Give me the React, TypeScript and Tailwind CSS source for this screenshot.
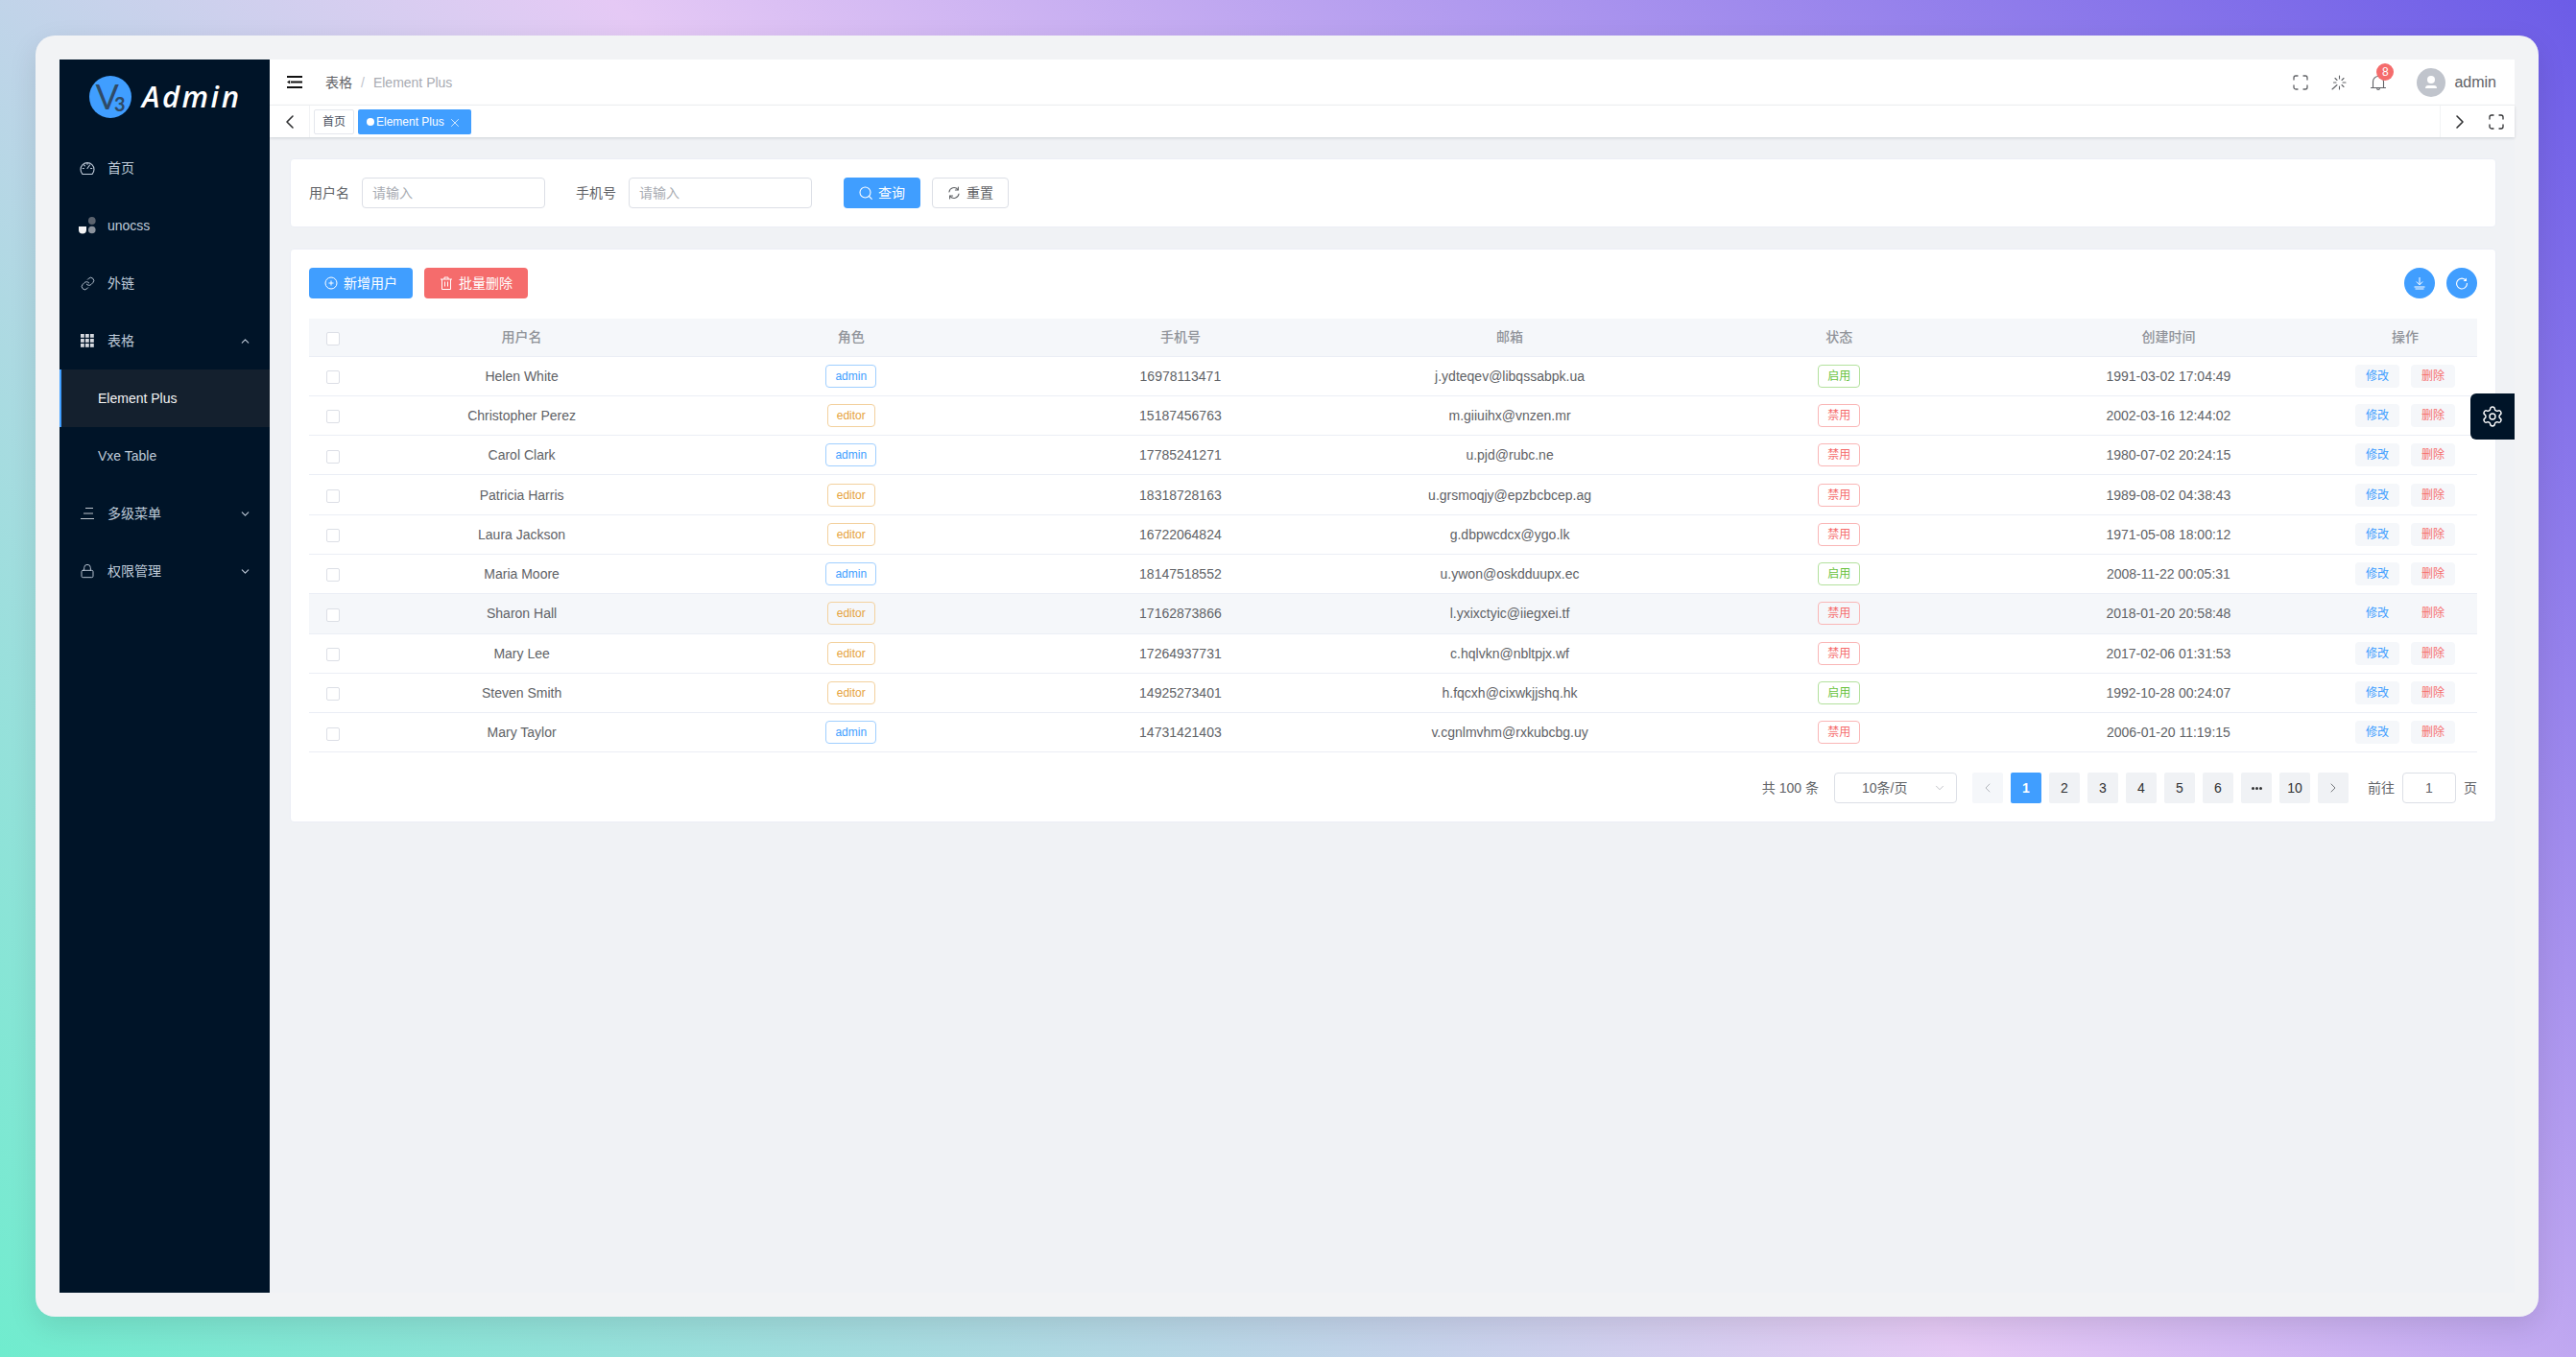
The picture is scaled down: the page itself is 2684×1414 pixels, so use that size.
import { ChevronDown, ChevronLeft, ChevronRight, ChevronUp, Link, Lock, Settings, X } from 'lucide-react'

const users = [
  { name: 'Helen White', role: 'admin', phone: '16978113471', email: 'j.ydteqev@libqssabpk.ua', on: true, time: '1991-03-02 17:04:49' },
  { name: 'Christopher Perez', role: 'editor', phone: '15187456763', email: 'm.giiuihx@vnzen.mr', on: false, time: '2002-03-16 12:44:02' },
  { name: 'Carol Clark', role: 'admin', phone: '17785241271', email: 'u.pjd@rubc.ne', on: false, time: '1980-07-02 20:24:15' },
  { name: 'Patricia Harris', role: 'editor', phone: '18318728163', email: 'u.grsmoqjy@epzbcbcep.ag', on: false, time: '1989-08-02 04:38:43' },
  { name: 'Laura Jackson', role: 'editor', phone: '16722064824', email: 'g.dbpwcdcx@ygo.lk', on: false, time: '1971-05-08 18:00:12' },
  { name: 'Maria Moore', role: 'admin', phone: '18147518552', email: 'u.ywon@oskdduupx.ec', on: true, time: '2008-11-22 00:05:31' },
  { name: 'Sharon Hall', role: 'editor', phone: '17162873866', email: 'l.yxixctyic@iiegxei.tf', on: false, time: '2018-01-20 20:58:48' },
  { name: 'Mary Lee', role: 'editor', phone: '17264937731', email: 'c.hqlvkn@nbltpjx.wf', on: false, time: '2017-02-06 01:31:53' },
  { name: 'Steven Smith', role: 'editor', phone: '14925273401', email: 'h.fqcxh@cixwkjjshq.hk', on: true, time: '1992-10-28 00:24:07' },
  { name: 'Mary Taylor', role: 'admin', phone: '14731421403', email: 'v.cgnlmvhm@rxkubcbg.uy', on: false, time: '2006-01-20 11:19:15' },
]

function FullscreenIcon({ className }: { className?: string }) {
  return (
    <svg viewBox="0 0 16 16" className={className} fill="none" stroke="currentColor" strokeWidth="1.3" strokeLinecap="round">
      <path d="M1 5V3a2 2 0 0 1 2-2h2M11 1h2a2 2 0 0 1 2 2v2M15 11v2a2 2 0 0 1-2 2h-2M5 15H3a2 2 0 0 1-2-2v-2" />
    </svg>
  )
}

function OdometerIcon() {
  return (
    <svg viewBox="0 0 16 16" className="w-4 h-4" fill="none" stroke="currentColor" strokeWidth="1.1">
      <path d="M3 14.5A7 7 0 1 1 13 14.5Z" strokeLinejoin="round" />
      <path d="M8 8.5 10.5 5M8 3v1.2M3.2 8.5h1.2M11.6 8.5h1.2M4.6 5l.8.8" strokeLinecap="round" />
    </svg>
  )
}

function UnocssIcon() {
  return (
    <svg viewBox="0 0 18 18" className="w-[18px] h-[18px]">
      <path d="M0 10h8v3.5a4 4 0 0 1-8 0Z" fill="#f4f4f5" />
      <circle cx="13.8" cy="13.5" r="3.8" fill="#8a929c" />
      <rect x="10" y="0" width="7.6" height="8" rx="3.8" fill="#5b636e" />
    </svg>
  )
}

function GridIcon() {
  return (
    <svg viewBox="0 0 14 14" className="w-[14px] h-[14px]" fill="#d5d9df">
      {[0, 5, 10].map((y) =>
        [0, 5, 10].map((x) => <rect key={`${x}-${y}`} x={x} y={y} width="3.8" height="3.8" />),
      )}
    </svg>
  )
}

function MenuLinesIcon() {
  return (
    <svg viewBox="0 0 16 14" className="w-4 h-[14px]" fill="none" stroke="#c0c6ce" strokeWidth="1">
      <path d="M6 1.5h8M4 7h10M1 12.5h14" />
    </svg>
  )
}

function FoldIcon() {
  return (
    <svg viewBox="0 0 16 13" className="w-4 h-[13px]" fill="#111">
      <rect width="16" height="2" />
      <rect x="4" y="5.5" width="12" height="2" />
      <rect y="11" width="16" height="2" />
      <path d="M0 6.5 3.2 4.4v4.2Z" />
    </svg>
  )
}

function SparkIcon() {
  return (
    <svg viewBox="0 0 16 16" className="w-4 h-4" fill="none" stroke="#606266" strokeWidth="1.1" strokeLinecap="round">
      <path d="M8.5 1v3M8.5 12v3M12 8h3M2.5 8h2.5M11 5.5l2-2M11 10.5l2 2M6 5.5l-2-2M6 10.5 1 15" />
    </svg>
  )
}

function BellIcon() {
  return (
    <svg viewBox="0 0 18 18" className="w-[18px] h-[18px]" fill="none" stroke="#606266" strokeWidth="1.1" strokeLinecap="round" strokeLinejoin="round">
      <path d="M1.5 14.5h15M3.5 14.5V8a5.5 5.5 0 0 1 11 0v6.5M9 1v1.5M7.5 14.5a1.5 2 0 0 0 3 0" />
    </svg>
  )
}

function SearchIcon() {
  return (
    <svg viewBox="0 0 14 14" className="w-[14px] h-[14px]" fill="none" stroke="currentColor" strokeWidth="1.1" strokeLinecap="round">
      <circle cx="6.5" cy="6.5" r="5.5" />
      <path d="m10.5 10.5 2.8 2.8" />
    </svg>
  )
}

function RefreshIcon() {
  return (
    <svg viewBox="0 0 14 14" className="w-[14px] h-[14px]" fill="none" stroke="currentColor" strokeWidth="1.1" strokeLinecap="round">
      <path d="M2 6a5 5 0 0 1 9-2.4M12 8a5 5 0 0 1-9 2.4" />
      <path d="M11.4 1v3h-3M2.6 13v-3h3" />
    </svg>
  )
}

function PlusCircleIcon() {
  return (
    <svg viewBox="0 0 14 14" className="w-[14px] h-[14px]" fill="none" stroke="currentColor" strokeWidth="1">
      <circle cx="7" cy="7" r="6" />
      <path d="M7 4.5v5M4.5 7h5" />
    </svg>
  )
}

function TrashIcon() {
  return (
    <svg viewBox="0 0 14 14" className="w-[14px] h-[14px]" fill="none" stroke="currentColor" strokeWidth="1">
      <path d="M1 3h12M5 3V1h4v2M2.5 3v10.5h9V3M5.5 5.5v5M8.5 5.5v5" />
    </svg>
  )
}

function DownloadIcon() {
  return (
    <svg viewBox="0 0 14 14" className="w-[14px] h-[14px]" fill="none" stroke="#fff" strokeWidth="1">
      <path d="M7 1v7.5M3.8 5.5 7 8.8l3.2-3.3M1.5 11h11M2.5 13h9" />
    </svg>
  )
}

function CircleRefreshIcon() {
  return (
    <svg viewBox="0 0 14 14" className="w-[14px] h-[14px]" fill="none" stroke="#fff" strokeWidth="1.1">
      <path d="M11.5 4.5A5.4 5.4 0 1 0 12.4 7" />
      <path d="M12 1.5v3.4H8.6" fill="#fff" stroke="none" />
    </svg>
  )
}

function AvatarIcon() {
  return (
    <svg viewBox="0 0 30 30" className="w-[30px] h-[30px]">
      <circle cx="15" cy="15" r="15" fill="#c0c4cc" />
      <circle cx="15" cy="12" r="4" fill="#fff" />
      <path d="M9 21a3 3 0 0 1 3-3h6a3 3 0 0 1 3 3Z" fill="#fff" />
    </svg>
  )
}

function Logo() {
  return (
    <div className="h-[83px] shrink-0 flex items-center pl-[31px] pb-[6px]">
      <div className="w-[44px] h-[44px] rounded-full bg-[#409eff] flex items-center justify-center text-[#2f4a66] font-['Lato',sans-serif]">
        <span className="text-[36px] leading-none -mt-[2px]">V</span>
        <span className="text-[20px] leading-none font-bold -ml-[5px] mt-[14px]">3</span>
      </div>
      <span className="ml-[11px] font-['Open_Sans',sans-serif] italic font-semibold text-[31px] leading-none text-white tracking-[2.5px]">Admin</span>
    </div>
  )
}

function MenuItem({ icon, label, arrow }: { icon: React.ReactNode; label: string; arrow?: 'up' | 'down' }) {
  return (
    <div className="h-[60px] flex items-center pl-[20px] pr-[19px] text-[#bfcbd9]">
      <span className="w-[18px] h-[18px] flex items-center justify-center">{icon}</span>
      <span className="ml-[12px] flex-1">{label}</span>
      {arrow === 'up' && <ChevronUp size={13} />}
      {arrow === 'down' && <ChevronDown size={13} />}
    </div>
  )
}

function Sidebar() {
  return (
    <aside className="w-[219px] shrink-0 bg-[#001428] text-sm flex flex-col">
      <Logo />
      <MenuItem icon={<OdometerIcon />} label="首页" />
      <MenuItem icon={<UnocssIcon />} label="unocss" />
      <MenuItem icon={<Link size={15} strokeWidth={1.5} />} label="外链" />
      <MenuItem icon={<GridIcon />} label="表格" arrow="up" />
      <div className="h-[60px] flex items-center pl-[38px] bg-[#14202e] border-l-2 border-[#409eff] text-[#f4f4f5]">Element Plus</div>
      <div className="h-[60px] flex items-center pl-[40px] text-[#bfcbd9]">Vxe Table</div>
      <MenuItem icon={<MenuLinesIcon />} label="多级菜单" arrow="down" />
      <MenuItem icon={<Lock size={16} strokeWidth={1.4} />} label="权限管理" arrow="down" />
    </aside>
  )
}

function Navbar() {
  return (
    <div className="h-[48px] shrink-0 bg-white border-b border-[#f2f3f5] flex items-center pl-[18px] pr-[19px] text-sm">
      <FoldIcon />
      <span className="ml-[24px] text-[#606266]">表格</span>
      <span className="mx-[9px] text-[#c0c4cc]">/</span>
      <span className="text-[#a8abb2]">Element Plus</span>
      <div className="flex-1" />
      <div className="flex items-center gap-[24px] text-[#606266]">
        <FullscreenIcon className="w-4 h-4" />
        <SparkIcon />
        <div className="relative">
          <BellIcon />
          <span className="absolute -top-[11px] left-[7px] w-[18px] h-[18px] rounded-full bg-[#f56c6c] text-white text-xs flex items-center justify-center">8</span>
        </div>
      </div>
      <div className="ml-[31px] flex items-center gap-[9px]">
        <AvatarIcon />
        <span className="text-base text-[#606266]">admin</span>
      </div>
    </div>
  )
}

function TagsBar() {
  return (
    <div className="h-[33px] shrink-0 bg-white flex items-center shadow-[0_1px_3px_rgba(0,21,41,0.15)] relative text-xs">
      <div className="w-[42px] h-full flex items-center justify-center border-r border-[#f2f3f5] text-[#303133]">
        <ChevronLeft size={24} strokeWidth={1.6} />
      </div>
      <div className="ml-[4px] w-[42px] h-[26px] border border-[#e4e7ed] rounded-[2px] flex items-center justify-center text-[#495060]">首页</div>
      <div className="ml-[4px] h-[26px] w-[118px] bg-[#409eff] rounded-[2px] flex items-center pl-[9px] text-white">
        <span className="w-2 h-2 rounded-full bg-white mr-[2px]" />
        <span>Element Plus</span>
        <X size={14} strokeWidth={1.3} className="ml-[4px] mt-[2px]" />
      </div>
      <div className="flex-1" />
      <div className="w-[40px] h-full flex items-center justify-center border-l border-[#f2f3f5] text-[#303133]">
        <ChevronRight size={24} strokeWidth={1.6} />
      </div>
      <div className="w-[38px] flex items-center justify-center text-[#303133]">
        <FullscreenIcon className="w-4 h-4" />
      </div>
    </div>
  )
}

function SearchCard() {
  return (
    <div className="h-[72px] shrink-0 bg-white border border-[#ebeef5] rounded-[4px] flex items-center px-[19px] text-sm">
      <span className="text-[#606266] w-[55px]">用户名</span>
      <div className="w-[191px] h-[32px] border border-[#dcdfe6] rounded-[4px] flex items-center px-[10px] text-[#a8abb2]">请输入</div>
      <span className="ml-[32px] text-[#606266] w-[55px]">手机号</span>
      <div className="w-[191px] h-[32px] border border-[#dcdfe6] rounded-[4px] flex items-center px-[10px] text-[#a8abb2]">请输入</div>
      <button className="ml-[33px] w-[80px] h-[32px] rounded-[4px] bg-[#409eff] text-white flex items-center justify-center gap-[6px]">
        <SearchIcon />
        查询
      </button>
      <button className="ml-[12px] w-[80px] h-[32px] rounded-[4px] border border-[#dcdfe6] text-[#606266] flex items-center justify-center gap-[6px]">
        <RefreshIcon />
        重置
      </button>
    </div>
  )
}

function Tag({ label, tone }: { label: string; tone: 'blue' | 'orange' | 'green' | 'red' }) {
  const tones = {
    blue: 'border-[#a0cfff] text-[#409eff]',
    orange: 'border-[#f3d19e] text-[#e6a23c]',
    green: 'border-[#b3e19d] text-[#67c23a]',
    red: 'border-[#fab6b6] text-[#f56c6c]',
  }
  return <span className={`inline-flex items-center justify-center h-[24px] px-[9px] text-xs border rounded-[4px] align-middle ${tones[tone]}`}>{label}</span>
}

function Checkbox() {
  return <span className="inline-block w-[14px] h-[14px] border border-[#dcdfe6] rounded-[2px] bg-white align-middle" />
}

function UserTable() {
  return (
    <table className="w-full table-fixed border-collapse text-sm text-[#606266] text-center">
      <colgroup>
        <col className="w-[50px]" />
        <col />
        <col />
        <col />
        <col />
        <col />
        <col />
        <col className="w-[150px]" />
      </colgroup>
      <thead>
        <tr className="h-[39px] bg-[#f5f7fa] text-[#909399] border-b border-[#ebeef5]">
          <th className="font-normal"><Checkbox /></th>
          <th className="font-medium">用户名</th>
          <th className="font-medium">角色</th>
          <th className="font-medium">手机号</th>
          <th className="font-medium">邮箱</th>
          <th className="font-medium">状态</th>
          <th className="font-medium">创建时间</th>
          <th className="font-medium">操作</th>
        </tr>
      </thead>
      <tbody>
        {users.map((u, i) => (
          <tr key={u.phone} className={`h-[41.3px] border-b border-[#ebeef5] ${i === 6 ? 'bg-[#f5f7fa]' : ''}`}>
            <td><Checkbox /></td>
            <td>{u.name}</td>
            <td><Tag label={u.role} tone={u.role === 'admin' ? 'blue' : 'orange'} /></td>
            <td>{u.phone}</td>
            <td>{u.email}</td>
            <td><Tag label={u.on ? '启用' : '禁用'} tone={u.on ? 'green' : 'red'} /></td>
            <td>{u.time}</td>
            <td>
              <div className="flex items-center justify-center gap-[12px] text-xs">
                <span className="w-[46px] h-[24px] rounded-[4px] bg-[#f5f7fa] text-[#409eff] flex items-center justify-center">修改</span>
                <span className="w-[46px] h-[24px] rounded-[4px] bg-[#f5f7fa] text-[#f56c6c] flex items-center justify-center">删除</span>
              </div>
            </td>
          </tr>
        ))}
      </tbody>
    </table>
  )
}

function Pagination() {
  const pages = ['1', '2', '3', '4', '5', '6', 'more', '10']
  return (
    <div className="mt-[21px] h-[32px] flex items-center justify-end text-sm text-[#606266]">
      <span>共 100 条</span>
      <div className="ml-[16px] w-[128px] h-[32px] border border-[#dcdfe6] rounded-[4px] flex items-center pl-[28px] pr-[10px]">
        <span className="flex-1">10条/页</span>
        <ChevronDown size={14} strokeWidth={1.2} className="text-[#a8abb2]" />
      </div>
      <div className="ml-[16px] flex gap-[8px]">
        <span className="w-[32px] h-[32px] rounded-[2px] bg-[#f5f7fa] text-[#a8abb2] flex items-center justify-center"><ChevronLeft size={16} strokeWidth={1.3} /></span>
        {pages.map((p, i) => (
          <span
            key={p}
            className={`w-[32px] h-[32px] rounded-[2px] flex items-center justify-center ${i === 0 ? 'bg-[#409eff] text-white font-bold' : 'bg-[#f0f2f5] text-[#303133]'}`}
          >
            {p === 'more' ? (
              <span className="flex gap-[1px]">
                <span className="w-[3px] h-[3px] rounded-full bg-[#303133]" />
                <span className="w-[3px] h-[3px] rounded-full bg-[#303133]" />
                <span className="w-[3px] h-[3px] rounded-full bg-[#303133]" />
              </span>
            ) : p}
          </span>
        ))}
        <span className="w-[32px] h-[32px] rounded-[2px] bg-[#f0f2f5] text-[#606266] flex items-center justify-center"><ChevronRight size={16} strokeWidth={1.3} /></span>
      </div>
      <span className="ml-[20px]">前往</span>
      <div className="ml-[8px] w-[56px] h-[32px] border border-[#dcdfe6] rounded-[4px] flex items-center justify-center">1</div>
      <span className="ml-[8px]">页</span>
    </div>
  )
}

function TableCard() {
  return (
    <div className="shrink-0 bg-white border border-[#ebeef5] rounded-[4px] px-[19px] pt-[19px] pb-[19px]">
      <div className="h-[32px] mb-[21px] flex items-center text-sm text-white">
        <button className="w-[108px] h-[32px] rounded-[4px] bg-[#409eff] flex items-center justify-center gap-[6px]">
          <PlusCircleIcon />
          新增用户
        </button>
        <button className="ml-[12px] w-[108px] h-[32px] rounded-[4px] bg-[#f56c6c] flex items-center justify-center gap-[6px]">
          <TrashIcon />
          批量删除
        </button>
        <div className="flex-1" />
        <span className="w-[32px] h-[32px] rounded-full bg-[#409eff] flex items-center justify-center"><DownloadIcon /></span>
        <span className="ml-[12px] w-[32px] h-[32px] rounded-full bg-[#409eff] flex items-center justify-center"><CircleRefreshIcon /></span>
      </div>
      <UserTable />
      <Pagination />
    </div>
  )
}

export default function App() {
  return (
    <div className="h-screen w-full overflow-hidden pl-[37px] pt-[37px] pr-[39px] pb-[42px] bg-[linear-gradient(45deg,#70ecce,#e5c9f5,#6c5ce7)] font-['Liberation_Sans','Noto_Sans_CJK_SC',sans-serif]">
      <div className="h-full rounded-[20px] bg-[#f2f3f5] p-[25px] flex shadow-[0_10px_30px_rgba(0,0,0,0.1)]">
        <Sidebar />
        <main className="flex-1 min-w-0 flex flex-col relative bg-[#f0f2f5]">
          <Navbar />
          <TagsBar />
          <div className="flex-1 flex flex-col gap-[22px] pt-[22px] pl-[21px] pr-[19px]">
            <SearchCard />
            <TableCard />
          </div>
          <div className="absolute right-0 top-[348px] w-[46px] h-[48px] rounded-l-[6px] bg-[#001428] text-white flex items-center justify-center">
            <Settings size={24} strokeWidth={1.4} />
          </div>
        </main>
      </div>
    </div>
  )
}
